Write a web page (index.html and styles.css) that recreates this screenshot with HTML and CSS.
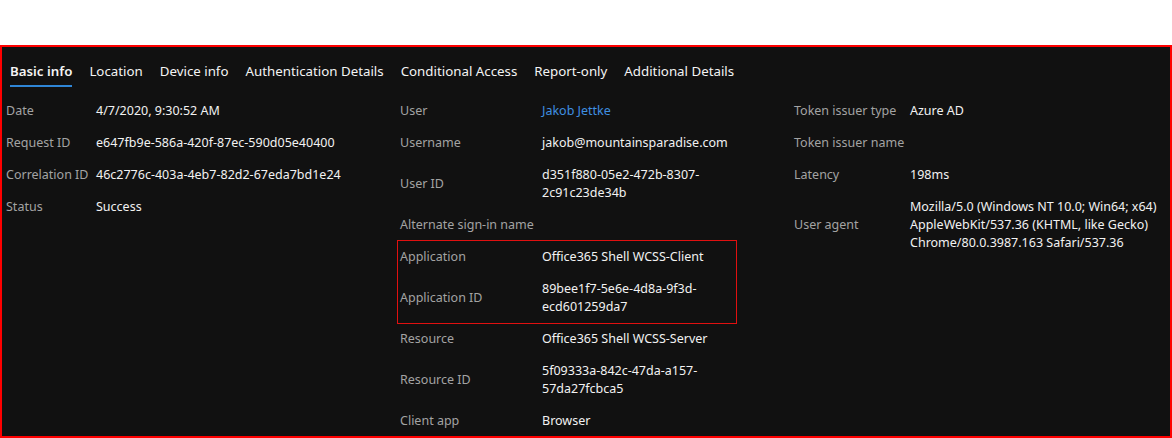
FILE: index.html
```html
<!DOCTYPE html>
<html lang="en">
<head>
<meta charset="utf-8">
<title>Sign-in activity details</title>
<link rel="stylesheet" href="styles.css">
</head>
<body>
<div class="top-space"></div>
<section class="panel">
  <nav class="tabs">
    <span class="tab active">Basic info</span>
    <span class="tab">Location</span>
    <span class="tab">Device info</span>
    <span class="tab">Authentication Details</span>
    <span class="tab">Conditional Access</span>
    <span class="tab">Report-only</span>
    <span class="tab">Additional Details</span>
  </nav>
  <div class="grid">
    <div class="col col1">
      <div class="row"><div class="label">Date</div><div class="value">4/7/2020, 9:30:52 AM</div></div>
      <div class="row"><div class="label">Request ID</div><div class="value">e647fb9e-586a-420f-87ec-590d05e40400</div></div>
      <div class="row"><div class="label">Correlation ID</div><div class="value">46c2776c-403a-4eb7-82d2-67eda7bd1e24</div></div>
      <div class="row"><div class="label">Status</div><div class="value">Success</div></div>
    </div>
    <div class="col col2">
      <div class="row"><div class="label">User</div><div class="value link">Jakob Jettke</div></div>
      <div class="row"><div class="label">Username</div><div class="value">jakob@mountainsparadise.com</div></div>
      <div class="row"><div class="label">User ID</div><div class="value">d351f880-05e2-472b-8307-2c91c23de34b</div></div>
      <div class="row"><div class="label">Alternate sign-in name</div><div class="value"></div></div>
      <div class="highlight">
        <div class="row"><div class="label">Application</div><div class="value">Office365 Shell WCSS-Client</div></div>
        <div class="row"><div class="label">Application ID</div><div class="value">89bee1f7-5e6e-4d8a-9f3d-ecd601259da7</div></div>
      </div>
      <div class="row"><div class="label">Resource</div><div class="value">Office365 Shell WCSS-Server</div></div>
      <div class="row"><div class="label">Resource ID</div><div class="value">5f09333a-842c-47da-a157-57da27fcbca5</div></div>
      <div class="row"><div class="label">Client app</div><div class="value">Browser</div></div>
    </div>
    <div class="col col3">
      <div class="row"><div class="label">Token issuer type</div><div class="value">Azure AD</div></div>
      <div class="row"><div class="label">Token issuer name</div><div class="value"></div></div>
      <div class="row"><div class="label">Latency</div><div class="value">198ms</div></div>
      <div class="row"><div class="label">User agent</div><div class="value">Mozilla/5.0 (Windows NT 10.0; Win64; x64) AppleWebKit/537.36 (KHTML, like Gecko) Chrome/80.0.3987.163 Safari/537.36</div></div>
    </div>
  </div>
</section>
</body>
</html>
```

FILE: styles.css
```css
* { box-sizing: border-box; }

html, body {
  margin: 0;
  padding: 0;
  background: #ffffff;
  width: 1172px;
  height: 438px;
  overflow: hidden;
}

body {
  font-family: "Noto Sans", "Open Sans", sans-serif;
  font-size: 12.5px;
  color: #f2f2f2;
}

.top-space {
  height: 45px;
}

.panel {
  height: 393px;
  border: 2px solid #ff0000;
  background: #111111;
  overflow: hidden;
}

.tabs {
  display: flex;
  gap: 17px;
  padding-left: 8px;
}

.tab {
  padding: 15px 0 4px;
  line-height: 19px;
  border-bottom: 2px solid transparent;
  font-size: 13.3px;
  color: #f4f4f4;
  white-space: nowrap;
}

.tab.active {
  font-weight: 600;
  border-bottom-color: #2f86d6;
}

.grid {
  display: grid;
  grid-template-columns: 391px 397px 1fr;
  padding-left: 4px;
  margin-top: 8px;
}

.row {
  display: grid;
  align-items: center;
  padding: 7px 0;
  line-height: 18px;
}

.label {
  color: #a3a3a3;
  white-space: nowrap;
}

.value {
  color: #f2f2f2;
}

.link {
  color: #3f8fe0;
}

.col1 .row {
  grid-template-columns: 90px 1fr;
}

.col2 {
  width: 340px;
}

.col2 .row {
  grid-template-columns: 142px 1fr;
  padding-left: 3px;
}

.col2 .highlight {
  border: 1px solid #e01010;
  margin: -1px 0;
}

.col2 .highlight .row {
  padding-left: 2px;
}

.col3 .row {
  grid-template-columns: 116px 1fr;
}
```
